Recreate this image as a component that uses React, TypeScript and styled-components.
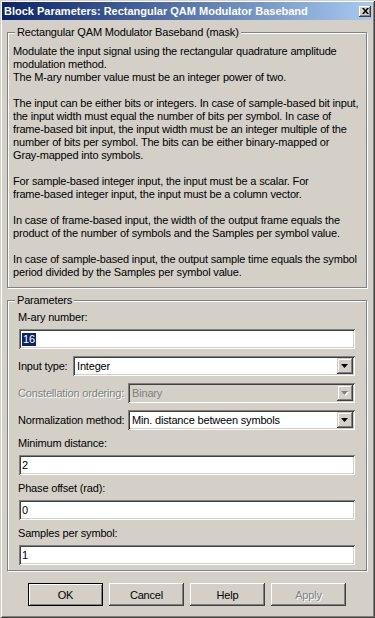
import styled, { createGlobalStyle } from 'styled-components'

const GlobalStyle = createGlobalStyle`
  html, body {
    margin: 0;
    padding: 0;
    background: #d4d0c8;
  }
  body {
    font-family: 'Liberation Sans', Arial, sans-serif;
    font-size: 11px;
    letter-spacing: -0.17px;
    color: #000;
  }
`

// khung cửa sổ kiểu Windows cổ điển
const Window = styled.div`
  box-sizing: border-box;
  width: 375px;
  height: 618px;
  padding: 2px 3px 3px 2px;
  background: #d4d0c8;
  box-shadow: inset 1px 1px 0 #d4d0c8, inset -1px -1px 0 #404040, inset 2px 2px 0 #fff,
    inset -2px -2px 0 #808080;
  display: flex;
  flex-direction: column;
`

const TitleBar = styled.div`
  height: 18px;
  display: flex;
  align-items: center;
  justify-content: space-between;
  padding: 0 1px 0 2px;
  background: linear-gradient(to right, #0a246a, #a6caf0);
  color: #fff;
  font-weight: bold;
  font-size: 11px;
  letter-spacing: 0;
  white-space: nowrap;
`

const CloseBtn = styled.div`
  width: 12px;
  height: 11px;
  display: flex;
  align-items: center;
  justify-content: center;
  background: #d4d0c8;
  box-shadow: inset -1px -1px 0 #404040, inset 1px 1px 0 #fff, inset -2px -2px 0 #808080;
`

const Group = styled.fieldset`
  margin: 6px 5px 0;
  padding: 0 5px;
  min-width: 0;
  border: 1px solid #808080;
  box-shadow: 1px 1px 0 #fff, inset 1px 1px 0 #fff;
`

const Caption = styled.legend`
  margin-left: 2px;
  padding: 0 2px;
  line-height: 13px;
  background: #d4d0c8;
`

const Desc = styled.div`
  padding: 6px 0 8px;
  line-height: 13px;
`

const Line = styled.div`
  white-space: nowrap;
  min-height: 13px;
`

const ParamBody = styled.div`
  display: flex;
  flex-direction: column;
  gap: 7px;
  padding: 4px 6px 5px 5px;
`

const Field = styled.div`
  display: flex;
  flex-direction: column;
  gap: 5px;
`

const Label = styled.div<{ $disabled?: boolean }>`
  line-height: 13px;
  white-space: nowrap;
  color: ${(p) => (p.$disabled ? '#808080' : '#000')};
  text-shadow: ${(p) => (p.$disabled ? '1px 1px 0 #fff' : 'none')};
`

const InlineRow = styled.div`
  display: flex;
  align-items: center;
`

const RowLabel = styled(Label)<{ $w: number }>`
  width: ${(p) => p.$w}px;
  flex: none;
`

const sunken = `
  box-sizing: border-box;
  height: 20px;
  box-shadow: inset 1px 1px 0 #808080, inset -1px -1px 0 #fff, inset 2px 2px 0 #404040,
    inset -2px -2px 0 #d4d0c8;
`

const TextBox = styled.div`
  ${sunken}
  margin-left: 1px;
  display: flex;
  align-items: center;
  padding: 0 3px;
  background: #fff;
  white-space: nowrap;
`

const Selected = styled.span`
  background: #0a246a;
  color: #fff;
  padding: 0 1px;
  line-height: 13px;
`

const Combo = styled.div<{ $disabled?: boolean }>`
  ${sunken}
  flex: 1;
  display: flex;
  align-items: center;
  padding: 2px;
  background: ${(p) => (p.$disabled ? '#d4d0c8' : '#fff')};
  color: ${(p) => (p.$disabled ? '#808080' : '#000')};
`

const ComboValue = styled.div`
  flex: 1;
  padding-left: 2px;
  white-space: nowrap;
  overflow: hidden;
`

const DropBtn = styled.div`
  width: 16px;
  height: 16px;
  flex: none;
  display: flex;
  align-items: center;
  justify-content: center;
  background: #d4d0c8;
  box-shadow: inset -1px -1px 0 #404040, inset 1px 1px 0 #d4d0c8, inset -2px -2px 0 #808080,
    inset 2px 2px 0 #fff;
`

const ButtonRow = styled.div`
  display: flex;
  justify-content: center;
  gap: 6px;
  margin-top: 12px;
`

const Button = styled.div<{ $default?: boolean; $disabled?: boolean }>`
  box-sizing: border-box;
  width: 75px;
  height: 23px;
  display: flex;
  align-items: center;
  justify-content: center;
  background: #d4d0c8;
  color: ${(p) => (p.$disabled ? '#808080' : '#000')};
  text-shadow: ${(p) => (p.$disabled ? '1px 1px 0 #fff' : 'none')};
  box-shadow: ${(p) =>
    p.$default
      ? 'inset 0 0 0 1px #000, inset 2px 2px 0 #fff, inset -2px -2px 0 #808080'
      : 'inset -1px -1px 0 #404040, inset 1px 1px 0 #fff, inset -2px -2px 0 #808080'};
`

const Arrow = ({ disabled }: { disabled?: boolean }) => (
  <svg width='8' height='5' viewBox='0 0 8 5'>
    {disabled && <polygon points='1,1 8,1 4.5,5' fill='#fff' />}
    <polygon points='0,0 7,0 3.5,4' fill={disabled ? '#808080' : '#000'} />
  </svg>
)

const desc = [
  'Modulate the input signal using the rectangular quadrature amplitude',
  'modulation method.',
  'The M-ary number value must be an integer power of two.',
  '',
  'The input can be either bits or integers. In case of sample-based bit input,',
  'the input width must equal the number of bits per symbol. In case of',
  'frame-based bit input, the input width must be an integer multiple of the',
  'number of bits per symbol. The bits can be either binary-mapped or',
  'Gray-mapped into symbols.',
  '',
  'For sample-based integer input, the input must be a scalar. For',
  'frame-based integer input, the input must be a column vector.',
  '',
  'In case of frame-based input, the width of the output frame equals the',
  'product of the number of symbols and the Samples per symbol value.',
  '',
  'In case of sample-based input, the output sample time equals the symbol',
  'period divided by the Samples per symbol value.',
]

const App = () => {
  return (
    <>
      <GlobalStyle />
      <Window>
        <TitleBar>
          <span>Block Parameters: Rectangular QAM Modulator Baseband</span>
          <CloseBtn>
            <svg width='7' height='6' viewBox='0 0 7 6'>
              <path d='M0 0h2l1.5 2L5 0h2L4.5 3 7 6H5L3.5 4 2 6H0l2.5-3z' fill='#000' />
            </svg>
          </CloseBtn>
        </TitleBar>

        {/* Mô tả khối */}
        <Group>
          <Caption>Rectangular QAM Modulator Baseband (mask)</Caption>
          <Desc>
            {desc.map((t, i) => (
              <Line key={i}>{t}</Line>
            ))}
          </Desc>
        </Group>

        {/* Tham số */}
        <Group>
          <Caption>Parameters</Caption>
          <ParamBody>
            <Field>
              <Label>M-ary number:</Label>
              <TextBox>
                <Selected>16</Selected>
              </TextBox>
            </Field>
            <InlineRow>
              <RowLabel $w={55}>Input type:</RowLabel>
              <Combo>
                <ComboValue>Integer</ComboValue>
                <DropBtn>
                  <Arrow />
                </DropBtn>
              </Combo>
            </InlineRow>
            <InlineRow>
              <RowLabel $w={110} $disabled>
                Constellation ordering:
              </RowLabel>
              <Combo $disabled>
                <ComboValue>Binary</ComboValue>
                <DropBtn>
                  <Arrow disabled />
                </DropBtn>
              </Combo>
            </InlineRow>
            <InlineRow>
              <RowLabel $w={110}>Normalization method:</RowLabel>
              <Combo>
                <ComboValue>Min. distance between symbols</ComboValue>
                <DropBtn>
                  <Arrow />
                </DropBtn>
              </Combo>
            </InlineRow>
            <Field>
              <Label>Minimum distance:</Label>
              <TextBox>2</TextBox>
            </Field>
            <Field>
              <Label>Phase offset (rad):</Label>
              <TextBox>0</TextBox>
            </Field>
            <Field>
              <Label>Samples per symbol:</Label>
              <TextBox>1</TextBox>
            </Field>
          </ParamBody>
        </Group>

        <ButtonRow>
          <Button $default>OK</Button>
          <Button>Cancel</Button>
          <Button>Help</Button>
          <Button $disabled>Apply</Button>
        </ButtonRow>
      </Window>
    </>
  )
}

export default App
